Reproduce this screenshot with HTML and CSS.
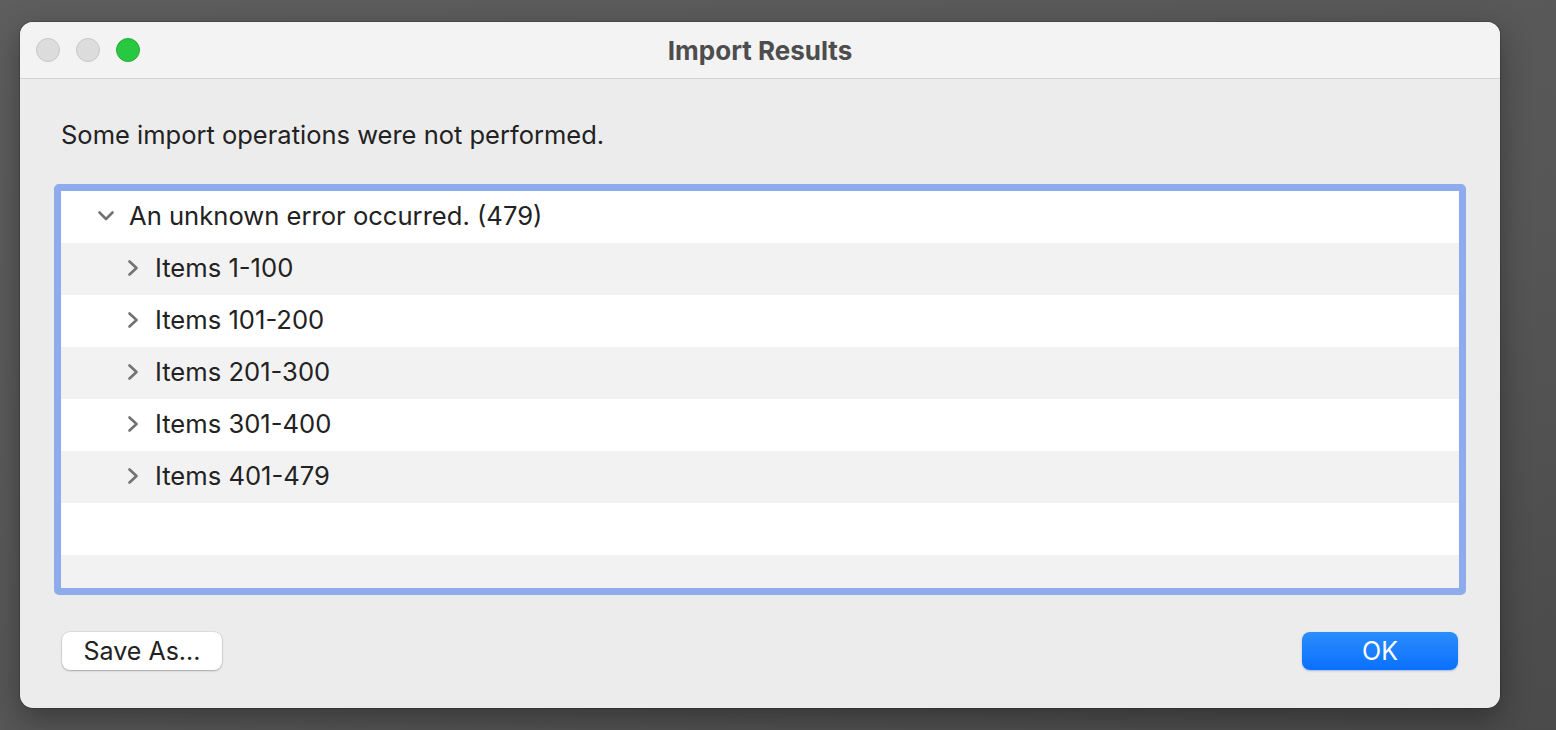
FILE: index.html
```html
<!DOCTYPE html>
<html>
<head>
<meta charset="utf-8">
<link rel="stylesheet" href="styles.css">
</head>
<body>
<div class="window">
  <div class="titlebar">
    <div class="lights">
      <span class="light gray"></span>
      <span class="light gray"></span>
      <span class="light green"></span>
    </div>
    <div class="title">Import Results</div>
  </div>
  <div class="content">
    <p class="message">Some import operations were not performed.</p>
    <div class="tree">
      <div class="row odd top">
        <svg class="chev down" width="18" height="14" viewBox="0 0 18 14"><path d="M2.5 3.5 L9 10 L15.5 3.5" fill="none" stroke="#727272" stroke-width="2.6" stroke-linecap="round" stroke-linejoin="round"/></svg>
        <span>An unknown error occurred. (479)</span>
      </div>
      <div class="row even sub">
        <svg class="chev" width="12" height="18" viewBox="0 0 12 18"><path d="M2.5 2.5 L9.5 9 L2.5 15.5" fill="none" stroke="#727272" stroke-width="2.6" stroke-linecap="round" stroke-linejoin="round"/></svg>
        <span>Items 1-100</span>
      </div>
      <div class="row odd sub">
        <svg class="chev" width="12" height="18" viewBox="0 0 12 18"><path d="M2.5 2.5 L9.5 9 L2.5 15.5" fill="none" stroke="#727272" stroke-width="2.6" stroke-linecap="round" stroke-linejoin="round"/></svg>
        <span>Items 101-200</span>
      </div>
      <div class="row even sub">
        <svg class="chev" width="12" height="18" viewBox="0 0 12 18"><path d="M2.5 2.5 L9.5 9 L2.5 15.5" fill="none" stroke="#727272" stroke-width="2.6" stroke-linecap="round" stroke-linejoin="round"/></svg>
        <span>Items 201-300</span>
      </div>
      <div class="row odd sub">
        <svg class="chev" width="12" height="18" viewBox="0 0 12 18"><path d="M2.5 2.5 L9.5 9 L2.5 15.5" fill="none" stroke="#727272" stroke-width="2.6" stroke-linecap="round" stroke-linejoin="round"/></svg>
        <span>Items 301-400</span>
      </div>
      <div class="row even sub">
        <svg class="chev" width="12" height="18" viewBox="0 0 12 18"><path d="M2.5 2.5 L9.5 9 L2.5 15.5" fill="none" stroke="#727272" stroke-width="2.6" stroke-linecap="round" stroke-linejoin="round"/></svg>
        <span>Items 401-479</span>
      </div>
      <div class="row odd"></div>
      <div class="row even last"></div>
    </div>
    <div class="buttons">
      <button class="btn secondary">Save As...</button>
      <button class="btn primary">OK</button>
    </div>
  </div>
</div>
</body>
</html>
```

FILE: styles.css
```css
html, body {
  margin: 0;
  padding: 0;
}
body {
  width: 1556px;
  height: 730px;
  overflow: hidden;
  background: linear-gradient(160deg, #5e5e5e 0%, #565656 60%, #4a4a4a 100%);
  font-family: Inter, "Noto Sans", "Liberation Sans", sans-serif;
  padding-top: 22px;
  padding-left: 20px;
  box-sizing: border-box;
}
.window {
  width: 1480px;
  height: 686px;
  border-radius: 13px;
  background: #ececec;
  overflow: hidden;
  display: flex;
  flex-direction: column;
  box-shadow: 0 10px 30px rgba(0,0,0,0.35), 0 0 0 1px rgba(0,0,0,0.15);
}
.titlebar {
  height: 56px;
  flex: none;
  background: #f3f3f3;
  border-bottom: 1px solid #d2d2d2;
  display: flex;
  align-items: center;
  position: relative;
}
.lights {
  display: flex;
  gap: 16px;
  padding-left: 16px;
}
.light {
  width: 24px;
  height: 24px;
  border-radius: 50%;
  box-sizing: border-box;
}
.light.gray {
  background: #dcdcdc;
  border: 1px solid #c6c6c6;
}
.light.green {
  background: #28c840;
  border: 1px solid #22ad36;
}
.title {
  position: absolute;
  left: 0;
  right: 0;
  text-align: center;
  font-weight: 700;
  font-size: 26px;
  color: #4d4d4d;
}
.content {
  flex: 1;
  display: flex;
  flex-direction: column;
  padding: 0 34px;
}
.message {
  margin: 41px 0 0 7px;
  font-size: 25.5px;
  line-height: 30px;
  color: #222;
}
.tree {
  margin-top: 34px;
  height: 411px;
  box-sizing: border-box;
  border: 7px solid #8eaced;
  border-radius: 5px;
  background: #fff;
  display: flex;
  flex-direction: column;
  overflow: hidden;
}
.row {
  height: 52px;
  flex: none;
  display: flex;
  align-items: center;
  font-size: 25.6px;
  color: #222;
}
.row span { position: relative; top: -2px; }
.row .chev { position: relative; top: -1px; }
.row.odd { background: #ffffff; }
.row.even { background: #f2f2f2; }
.row.last { flex: 1; height: auto; }
.row.top { padding-left: 36px; }
.row.top .chev { margin-right: 14px; }
.row.sub { padding-left: 66px; }
.row.sub .chev { margin-right: 16px; }
.buttons {
  margin-top: 37px;
  display: flex;
  justify-content: space-between;
  padding: 0 8px;
}
.btn {
  height: 38px;
  border-radius: 8px;
  font-family: Inter, "Noto Sans", "Liberation Sans", sans-serif;
  font-size: 25px;
  border: none;
  padding: 0;
}
.secondary {
  width: 160px;
  background: #ffffff;
  color: #222;
  box-shadow: 0 1px 2px rgba(0,0,0,0.25), 0 0 0 0.5px rgba(0,0,0,0.12);
}
.primary {
  width: 156px;
  background: linear-gradient(#2b8dfd, #0a70fd);
  color: #fff;
  box-shadow: 0 1px 2px rgba(0,60,200,0.3);
}
```
